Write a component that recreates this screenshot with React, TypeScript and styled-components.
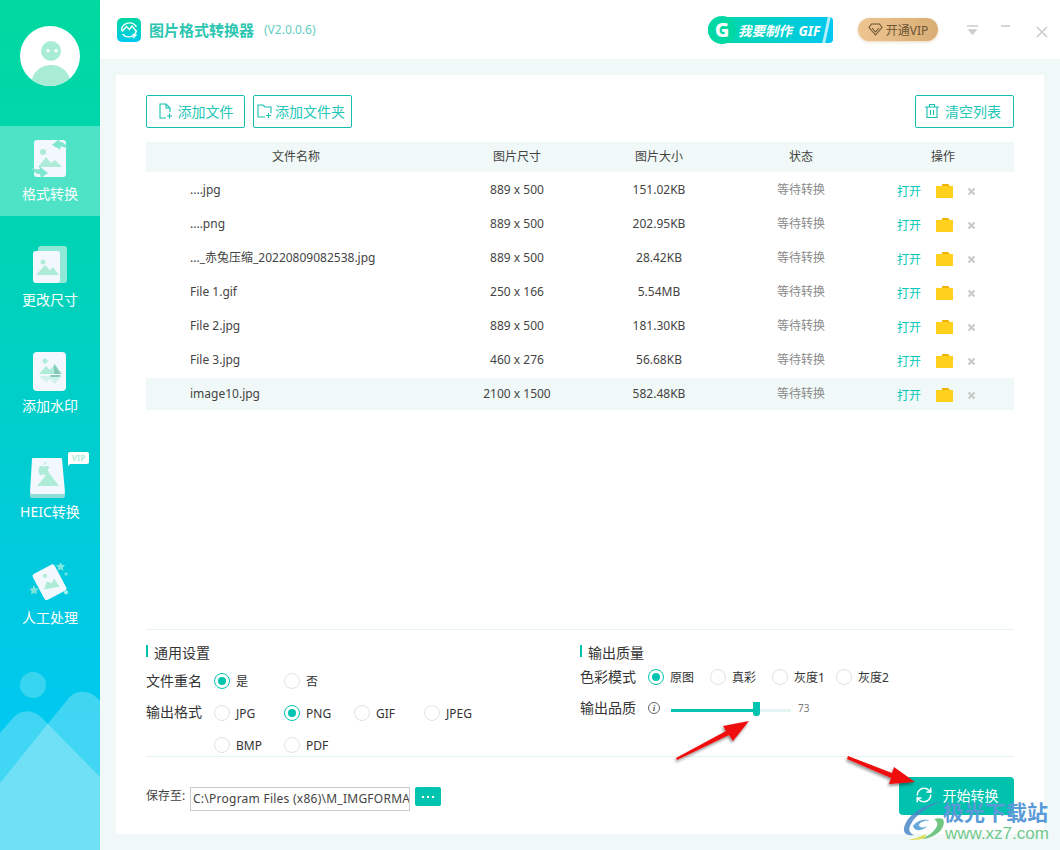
import React from 'react';
import styled, { createGlobalStyle } from 'styled-components';
import { RefreshCw } from 'lucide-react';

const GlobalStyle = createGlobalStyle`
  html, body {
    margin: 0;
    padding: 0;
    background: #ffffff;
  }
  * {
    box-sizing: border-box;
  }
  body {
    font-family: "Noto Sans", "Noto Sans CJK SC", sans-serif;
    color: #333333;
  }
`;

const Window = styled.div`
  position: relative;
  width: 1060px;
  height: 850px;
  display: flex;
  overflow: hidden;
`;

/* sidebar */
const Sidebar = styled.aside`
  position: relative;
  width: 100px;
  flex: none;
  background: linear-gradient(180deg, #00d9a0 0%, #00d3b6 30%, #00cbd9 62%, #00c8f0 85%);
  overflow: hidden;
`;
const Avatar = styled.div`
  width: 60px;
  height: 60px;
  margin: 26px 0 40px 20px;
  border-radius: 50%;
  background: #ffffff;
  overflow: hidden;
`;
const NavList = styled.nav`
  position: relative;
  z-index: 1;
  display: flex;
  flex-direction: column;
  gap: 16px;
`;
const NavItem = styled.div<{ $active?: boolean }>`
  position: relative;
  height: 90px;
  display: flex;
  flex-direction: column;
  align-items: center;
  padding-top: 13px;
  background: ${(p) => (p.$active ? '#4ee3c6' : 'transparent')};
`;
const NavIcon = styled.div`
  width: 44px;
  height: 44px;
  display: flex;
  align-items: center;
  justify-content: center;
`;
const NavLabel = styled.span`
  margin-top: 1px;
  font-size: 14px;
  line-height: 20px;
  color: #ffffff;
  white-space: nowrap;
`;
const VipTag = styled.span`
  position: absolute;
  top: 8px;
  left: 68px;
  width: 21px;
  height: 12px;
  border-radius: 2px;
  background: #ffffff;
  color: #aeeedd;
  font-size: 8px;
  line-height: 12px;
  font-weight: 700;
  text-align: center;

  &::after {
    content: '';
    position: absolute;
    left: 0;
    top: 11px;
    border-top: 3px solid #ffffff;
    border-right: 3px solid transparent;
  }
`;
const SideScene = styled.svg`
  position: absolute;
  left: 0;
  bottom: 0;
  width: 100px;
  height: 180px;
`;

/* right side */
const Content = styled.div`
  flex: 1;
  display: flex;
  flex-direction: column;
  min-width: 0;
  background: #f0f9f7;
`;
const Header = styled.header`
  height: 59px;
  flex: none;
  display: flex;
  align-items: center;
  padding: 0 12px 0 17px;
  background: #ffffff;
`;
const AppTitle = styled.span`
  margin-left: 8px;
  font-size: 15px;
  font-weight: 700;
  color: #2cc6b0;
  white-space: nowrap;
`;
const Version = styled.span`
  margin-left: 10px;
  font-size: 12px;
  color: #5fcfc0;
`;
const GifBanner = styled.div`
  position: relative;
  margin-left: auto;
  width: 125px;
  height: 26px;
  display: flex;
  align-items: center;
  border-radius: 13px 4px 4px 13px;
  background: linear-gradient(90deg, #00d8a4 0%, #00d0c8 50%, #00c8f0 100%);
  color: #ffffff;
`;
const GifMark = styled.span`
  width: 28px;
  height: 28px;
  flex: none;
  border-radius: 50%;
  background: #00d8a4;
  text-align: center;
  font-size: 20px;
  line-height: 27px;
  font-weight: 800;
`;
const GifText = styled.span`
  margin-left: 2px;
  font-size: 13.5px;
  font-weight: 700;
  font-style: italic;
  word-spacing: 3px;
  white-space: nowrap;
`;
const GifShine = styled.span`
  position: absolute;
  right: 5px;
  top: 0;
  width: 3px;
  height: 26px;
  background: rgba(255, 255, 255, 0.7);
  transform: skewX(-12deg);
`;
const VipPill = styled.div`
  margin-left: 25px;
  width: 80px;
  height: 23px;
  display: flex;
  align-items: center;
  justify-content: center;
  gap: 3px;
  border-radius: 12px;
  background: linear-gradient(90deg, #eec491, #d8ae75);
  box-shadow: 0 1px 3px rgba(216, 174, 117, 0.5);
  color: #6d5333;
  font-size: 12px;
`;
const WindowButtons = styled.div`
  margin-left: 29px;
  width: 81px;
  display: flex;
  align-items: center;
  gap: 23px;
`;
const CloseIcon = styled.svg`
  width: 12px;
  height: 12px;
  margin: 4px 0 0 3px;
`;

const Main = styled.main`
  flex: 1;
  display: flex;
  padding: 16px;
  min-height: 0;
`;
const Panel = styled.section`
  flex: 1;
  display: flex;
  flex-direction: column;
  padding: 20px 30px 0;
  background: #ffffff;
`;
const Toolbar = styled.div`
  display: flex;
  gap: 8px;
`;
const ToolButton = styled.button`
  width: 99px;
  height: 33px;
  padding: 0 0 2px 0;
  display: flex;
  align-items: center;
  justify-content: center;
  gap: 5px;
  border: 1px solid #14bfae;
  border-radius: 2px;
  background: #ffffff;
  color: #22c7b5;
  font-family: inherit;
  font-size: 14px;
  white-space: nowrap;
`;
const WideToolButton = styled(ToolButton)`
  padding-right: 3px;
  gap: 3px;
`;
const ClearButton = styled(ToolButton)`
  margin-left: auto;
  padding-right: 4px;
`;

const Table = styled.div`
  margin-top: 14px;
  display: flex;
  flex-direction: column;
`;
const HeadRow = styled.div`
  height: 30px;
  margin-bottom: 1px;
  padding-bottom: 2px;
  display: grid;
  grid-template-columns: 300px repeat(4, 142px);
  align-items: center;
  background: #f0f9f7;
  font-size: 12px;
  color: #444444;
  text-align: center;
`;
const Row = styled.div<{ $selected?: boolean }>`
  height: ${(p) => (p.$selected ? 32 : 34)}px;
  margin: ${(p) => (p.$selected ? '1px 0' : '0')};
  padding-bottom: 2px;
  display: grid;
  grid-template-columns: 300px repeat(4, 142px);
  align-items: center;
  background: ${(p) => (p.$selected ? '#f0f9f7' : 'transparent')};
  font-size: 12px;
  color: #444444;
  text-align: center;
`;
const NameCell = styled.span`
  padding-left: 44px;
  text-align: left;
  white-space: nowrap;
`;
const StatusCell = styled.span`
  color: #8a8a8a;
`;
const ActionCell = styled.div`
  display: flex;
  align-items: center;
  padding: 4px 0 0 25px;
`;
const OpenLink = styled.span`
  color: #00c8b8;
  width: 24px;
  white-space: nowrap;
`;
const FolderIcon = styled.svg`
  margin-left: 15px;
  width: 18px;
  height: 15px;
`;
const RemoveIcon = styled.svg`
  margin-left: 13px;
  width: 9px;
  height: 9px;
`;

/* settings */
const Settings = styled.div`
  margin-top: auto;
  height: 128px;
  padding-top: 15px;
  display: grid;
  grid-template-columns: 434px 1fr;
  border-top: 1px solid #e6f4f1;
  border-bottom: 1px solid #e6f4f1;
`;
const SettingGroup = styled.div`
  display: flex;
  flex-direction: column;
`;
const GroupTitle = styled.div`
  position: relative;
  height: 16px;
  padding-left: 8px;
  font-size: 14px;
  line-height: 16px;
  color: #333333;

  &::before {
    content: '';
    position: absolute;
    left: 0;
    top: 0;
    width: 2px;
    height: 12px;
    background: #00c4b0;
  }
`;
const SettingRow = styled.div<{ $height: number }>`
  height: ${(p) => p.$height}px;
  display: flex;
  align-items: center;
`;
const FirstRow = styled(SettingRow)`
  margin-top: 4px;
`;
const FormatRow = styled(SettingRow)`
  align-items: flex-start;
`;
const RowLabel = styled.span`
  width: 68px;
  flex: none;
  font-size: 14px;
  line-height: 30px;
  color: #333333;
  white-space: nowrap;
`;
const RadioGrid = styled.div<{ $cols: string; $gap?: number; $top?: number }>`
  margin-top: ${(p) => p.$top ?? 0}px;
  display: grid;
  grid-template-columns: ${(p) => p.$cols};
  row-gap: ${(p) => p.$gap ?? 0}px;
`;
const RadioItem = styled.label`
  height: 16px;
  display: flex;
  align-items: center;
  gap: 6px;
  font-size: 12px;
  color: #333333;
  white-space: nowrap;
`;
const RadioDot = styled.span<{ $on?: boolean }>`
  width: 16px;
  height: 16px;
  flex: none;
  display: flex;
  align-items: center;
  justify-content: center;
  border-radius: 50%;
  border: 1px solid ${(p) => (p.$on ? '#00c4b0' : '#e2e2e2')};

  &::after {
    content: '';
    display: ${(p) => (p.$on ? 'block' : 'none')};
    width: 8px;
    height: 8px;
    border-radius: 50%;
    background: #00c4b0;
  }
`;
const InfoMark = styled.span`
  width: 12px;
  height: 12px;
  flex: none;
  border: 1px solid #666666;
  border-radius: 50%;
  font-family: "Liberation Serif", serif;
  font-style: italic;
  font-weight: 700;
  font-size: 9px;
  line-height: 10px;
  text-align: center;
  color: #555555;
`;
const SliderTrack = styled.div`
  position: relative;
  margin-left: 11px;
  width: 120px;
  height: 3px;
  margin-top: 5px;
  background: #e4f4f2;
`;
const SliderFill = styled.div`
  height: 100%;
  background: #00c4b0;
`;
const SliderThumb = styled.span`
  position: absolute;
  top: -7px;
  width: 7px;
  height: 14px;
  margin-left: -3px;
  border-radius: 0 0 3px 3px;
  background: #00c4b0;
`;
const SliderValue = styled.span`
  margin-left: 7px;
  font-size: 10px;
  color: #777777;
`;

/* footer */
const Footer = styled.div`
  height: 77px;
  padding-top: 20px;
  display: flex;
  align-items: flex-start;
`;
const SaveLabel = styled.span`
  margin-top: 11px;
  width: 44px;
  flex: none;
  font-size: 12px;
  line-height: 16px;
  color: #444444;
  white-space: nowrap;
`;
const PathBox = styled.div`
  margin-top: 10px;
  width: 220px;
  height: 24px;
  padding: 0 0 0 2px;
  border: 1px solid #cccccc;
  font-size: 12px;
  line-height: 22px;
  letter-spacing: 0.25px;
  color: #444444;
  white-space: nowrap;
  overflow: hidden;
`;
const DotsButton = styled.button`
  margin: 10px 0 0 5px;
  width: 26px;
  height: 19px;
  padding: 0;
  display: flex;
  align-items: center;
  justify-content: center;
  gap: 3px;
  border: none;
  border-radius: 2px;
  background: #00c4b0;
`;
const Dot = styled.span`
  width: 2px;
  height: 2px;
  background: #ffffff;
`;
const StartButton = styled.button`
  margin-left: auto;
  width: 115px;
  height: 38px;
  padding: 0 0 2px 0;
  display: flex;
  align-items: center;
  justify-content: center;
  gap: 10px;
  border: none;
  border-radius: 4px;
  background: #00c2ae;
  color: #ffffff;
  font-family: inherit;
  font-size: 14px;
`;

/* things lying over the page */
const Arrows = styled.svg`
  position: absolute;
  left: 0;
  top: 0;
  width: 1060px;
  height: 850px;
  pointer-events: none;
`;
const Watermark = styled.div`
  position: absolute;
  left: 900px;
  top: 798px;
  width: 155px;
  height: 52px;
  pointer-events: none;
`;
const WatermarkLogo = styled.svg`
  position: absolute;
  left: 3px;
  top: 2px;
  width: 44px;
  height: 44px;
`;
const WatermarkName = styled.span`
  position: absolute;
  left: 43px;
  top: 2px;
  font-size: 21px;
  line-height: 24px;
  font-weight: 700;
  color: #5a9ad8;
  white-space: nowrap;
`;
const WatermarkUrl = styled.span`
  position: absolute;
  left: 45px;
  top: 26px;
  font-family: "Liberation Sans", sans-serif;
  font-size: 17px;
  line-height: 20px;
  color: #72c88e;
  white-space: nowrap;
`;

const CARD = '#f3f8ff';
const MINT = '#aeecd8';

const ConvertIcon = () => (
  <svg width="44" height="44" viewBox="0 3 44 44">
    <rect x="6" y="4" width="32" height="37" rx="3" fill={CARD} />
    <circle cx="15" cy="16" r="3" fill={MINT} />
    <path d="M10 31l8-10 5 6 4-3 7 7z" fill={MINT} />
    <path d="M24 9l7-6 1 3c4 0 7 3 8 8-3-3-5-4-8-3l1 3z" fill="#7fe6cf" />
    <path d="M20 37l-7 5-1-4c-4 0-7-2-9-7 3 2 6 3 9 2l-1-3z" fill="#7fe6cf" />
  </svg>
);
const ResizeIcon = () => (
  <svg width="44" height="44" viewBox="0 0 44 44">
    <rect x="10" y="1" width="29" height="37" rx="3" fill="#8fe9d6" />
    <rect x="5" y="6" width="27" height="32" rx="3" fill={CARD} />
    <circle cx="15" cy="17" r="2.5" fill={MINT} />
    <path d="M8 30l9-10 5 5 3-3 6 8z" fill={MINT} />
  </svg>
);
const WatermarkIcon = () => (
  <svg width="44" height="44" viewBox="0 2 44 44">
    <rect x="5" y="3" width="33" height="39" rx="4" fill={CARD} />
    <circle cx="17" cy="12" r="2.5" fill={MINT} />
    <path d="M11 25l7-8 4 4 5-6 7 10z" fill={MINT} />
    <path d="M11 27l7 6 4-3 5 5 7-8z" fill={MINT} opacity="0.5" />
    <path d="M26 15v10h7z" fill="#87c9b8" />
    <path d="M22 26h11l-2 2h-8z" fill="#87c9b8" />
  </svg>
);
const HeicIcon = () => (
  <svg width="44" height="44" viewBox="0 0 44 44">
    <path d="M2 35h35v4c0 1-1 2-2 2H4c-1 0-2-1-2-2z" fill="#8fdcd8" />
    <path d="M5 1h28c1 0 1 1 1 1l3 33c0 1-1 2-2 2H4c-1 0-2-1-2-2L4 2c0-1 1-1 1-1z" fill={CARD} />
    <g transform="translate(-2.8 0.7) scale(0.8)">
      <path d="M27 5c-1 3-3 4-4 4 0-2 2-4 4-4z" fill={MINT} />
      <path d="M19 10c2 0 3 1 4 1s2-1 4-1c2 0 3 2 3 3-2 1-2 4 0 5-1 2-2 4-4 4-1 0-2-1-3-1s-2 1-3 1c-3 0-5-8-1-12z" fill={MINT} />
    </g>
    <path d="M9 29l10-12c1-1 2-1 3 0l9 12z" fill={MINT} />
  </svg>
);
const ManualIcon = () => (
  <svg width="48" height="44" viewBox="1.500 3 48 44">
    <rect x="11.500" y="6" width="27" height="32" rx="3" fill={CARD} transform="rotate(-28 25 22)" />
    <circle cx="20" cy="15" r="2.3" fill={MINT} />
    <path d="M19 30l3-9 5 2 3-5 6 9z" fill={MINT} />
    <path d="M37 0l1.500 3 3.500 .5-2.500 2.500 .6 3.500-3.100-1.600-3.100 1.600 .6-3.500-2.500-2.500 3.500-.5z" fill="#7fe6dd" />
    <path d="M8 25l1.500 3.500 3.500 .5-2.500 2.500 .6 3.500-3.100-1.600-3.100 1.600 .6-3.500-2.500-2.500 3.500-.5z" fill="#7fe6dd" />
    <circle cx="43" cy="13" r="1.200" fill="none" stroke="#a5f0e8" />
    <circle cx="43" cy="33" r="2.300" fill="#a5f0e8" />
  </svg>
);

const navItems = [
  { label: '格式转换', icon: <ConvertIcon />, active: true },
  { label: '更改尺寸', icon: <ResizeIcon /> },
  { label: '添加水印', icon: <WatermarkIcon /> },
  { label: 'HEIC转换', icon: <HeicIcon />, vip: true },
  { label: '人工处理', icon: <ManualIcon /> },
];

const files = [
  { name: '....jpg', size: '889 x 500', weight: '151.02KB' },
  { name: '....png', size: '889 x 500', weight: '202.95KB' },
  { name: '..._赤兔压缩_20220809082538.jpg', size: '889 x 500', weight: '28.42KB' },
  { name: 'File 1.gif', size: '250 x 166', weight: '5.54MB' },
  { name: 'File 2.jpg', size: '889 x 500', weight: '181.30KB' },
  { name: 'File 3.jpg', size: '460 x 276', weight: '56.68KB' },
  { name: 'image10.jpg', size: '2100 x 1500', weight: '582.48KB', selected: true },
];

const quality = 71;

const Radio = ({ label, on }: { label: string; on?: boolean }) => (
  <RadioItem>
    <RadioDot $on={on} />
    {label}
  </RadioItem>
);

const App = () => {
  return (
    <Window>
      <GlobalStyle />
      <Sidebar>
        <SideScene viewBox="0 0 100 180">
          <circle cx="33" cy="15" r="13" fill="#ffffff" opacity="0.22" />
          <path d="M0 63L13 48c8-9 20-9 29 0l58 59v73H0z" fill="#ffffff" opacity="0.25" />
          <path d="M0 113L68 29c8-10 22-10 32 2v149H0z" fill="#ffffff" opacity="0.25" />
        </SideScene>
        <Avatar>
          <svg width="60" height="60" viewBox="0 0 60 60">
            <circle cx="31" cy="25" r="10" fill="#a8ecd6" />
            <circle cx="28" cy="24.700" r="1.700" fill="#ffffff" />
            <circle cx="36" cy="24.700" r="1.700" fill="#ffffff" />
            <path d="M11 60c0-12 8-21 20-21s20 9 20 21z" fill="#a8ecd6" />
          </svg>
        </Avatar>
        <NavList>
          {navItems.map((item) => (
            <NavItem key={item.label} $active={item.active}>
              <NavIcon>{item.icon}</NavIcon>
              <NavLabel>{item.label}</NavLabel>
              {item.vip && <VipTag>VIP</VipTag>}
            </NavItem>
          ))}
        </NavList>
      </Sidebar>
      <Content>
        <Header>
          <svg width="24" height="24" viewBox="0 0 24 24">
            <defs>
              <linearGradient id="logoBg" x1="0" y1="0" x2="0" y2="1">
                <stop offset="0" stopColor="#00d8a0" />
                <stop offset="1" stopColor="#00c8ee" />
              </linearGradient>
            </defs>
            <rect width="24" height="24" rx="5" fill="url(#logoBg)" />
            <path d="M4.500 12.500a8 8 0 0 1 15 -3.500M19.500 12.500a8 8 0 0 1-14 3.500" fill="none" stroke="#fff" strokeWidth="1.300" />
            <path d="M5 13.500l4.500-5 3 3 2.500-3.500 4.500 5.500M16 20l3-3-3.500-1" fill="none" stroke="#fff" strokeWidth="1.300" />
          </svg>
          <AppTitle>图片格式转换器</AppTitle>
          <Version>(V2.0.0.6)</Version>
          <GifBanner>
            <GifMark>G</GifMark>
            <GifText>我要制作 GIF</GifText>
            <GifShine />
          </GifBanner>
          <VipPill>
            <svg width="15" height="13" viewBox="0 0 15 13">
              <path d="M3.500 1h8L14 4.500 7.500 12 1 4.500zM4 5l3.500 4L11 5" fill="none" stroke="#6d5333" strokeWidth="1.100" />
            </svg>
            开通VIP
          </VipPill>
          <WindowButtons>
            <svg width="11" height="10" viewBox="0 0 11 10">
              <path d="M0 1h11M2 5h7l-3.500 4z" fill="#cccccc" stroke="#cccccc" strokeWidth="1.400" />
            </svg>
            <svg width="9" height="10" viewBox="0 0 9 10">
              <path d="M0 1h9" stroke="#cccccc" strokeWidth="1.600" />
            </svg>
            <CloseIcon viewBox="0 0 12 12">
              <path d="M1 1l10 10M11 1L1 11" stroke="#cccccc" strokeWidth="1.600" />
            </CloseIcon>
          </WindowButtons>
        </Header>
        <Main>
          <Panel>
            <Toolbar>
              <ToolButton>
                <svg width="15" height="16" viewBox="0 0 15 16" fill="none" stroke="#14bfae" strokeWidth="1.100">
                  <path d="M8 15H2V1h6l4 4v4" />
                  <path d="M8 1v4h4M11.500 10.500v5M9 13h5" />
                </svg>
                添加文件
              </ToolButton>
              <WideToolButton>
                <svg width="15" height="14" viewBox="0 0 15 14" fill="none" stroke="#14bfae" strokeWidth="1.100">
                  <path d="M8 13H1V1h5l2 2h6v6" />
                  <path d="M11.500 9v5M9 11.500h5" />
                </svg>
                添加文件夹
              </WideToolButton>
              <ClearButton>
                <svg width="16" height="16" viewBox="0 0 16 16" fill="none" stroke="#14bfae" strokeWidth="1.100">
                  <path d="M1 4h14M5.500 4V1.500h5V4M3 4v10.500h10V4M6.500 7v5M9.500 7v5" />
                </svg>
                清空列表
              </ClearButton>
            </Toolbar>
            <Table>
              <HeadRow>
                <span>文件名称</span>
                <span>图片尺寸</span>
                <span>图片大小</span>
                <span>状态</span>
                <span>操作</span>
              </HeadRow>
              {files.map((file) => (
                <Row key={file.name} $selected={file.selected}>
                  <NameCell>{file.name}</NameCell>
                  <span>{file.size}</span>
                  <span>{file.weight}</span>
                  <StatusCell>等待转换</StatusCell>
                  <ActionCell>
                    <OpenLink>打开</OpenLink>
                    <FolderIcon viewBox="0 0 18 15">
                      <path d="M6 0h6l2 2H6z" fill="#f0b400" />
                      <rect y="2" width="17" height="12" fill="#ffd11c" />
                    </FolderIcon>
                    <RemoveIcon viewBox="0 0 9 9">
                      <path d="M1.500 1.500l6 6M7.500 1.500l-6 6" stroke="#c8c8c8" strokeWidth="2" />
                    </RemoveIcon>
                  </ActionCell>
                </Row>
              ))}
            </Table>
            <Settings>
              <SettingGroup>
                <GroupTitle>通用设置</GroupTitle>
                <FirstRow $height={32}>
                  <RowLabel>文件重名</RowLabel>
                  <RadioGrid $cols="70px 70px">
                    <Radio label="是" on />
                    <Radio label="否" />
                  </RadioGrid>
                </FirstRow>
                <FormatRow $height={32}>
                  <RowLabel>输出格式</RowLabel>
                  <RadioGrid $cols="repeat(4, 70px)" $gap={16} $top={8}>
                    <Radio label="JPG" />
                    <Radio label="PNG" on />
                    <Radio label="GIF" />
                    <Radio label="JPEG" />
                    <Radio label="BMP" />
                    <Radio label="PDF" />
                  </RadioGrid>
                </FormatRow>
              </SettingGroup>
              <SettingGroup>
                <GroupTitle>输出质量</GroupTitle>
                <SettingRow $height={32}>
                  <RowLabel>色彩模式</RowLabel>
                  <RadioGrid $cols="62px 62px 64px 70px">
                    <Radio label="原图" on />
                    <Radio label="真彩" />
                    <Radio label="灰度1" />
                    <Radio label="灰度2" />
                  </RadioGrid>
                </SettingRow>
                <SettingRow $height={30}>
                  <RowLabel>输出品质</RowLabel>
                  <InfoMark>i</InfoMark>
                  <SliderTrack>
                    <SliderFill style={{ width: `${quality}%` }} />
                    <SliderThumb style={{ left: `${quality}%` }} />
                  </SliderTrack>
                  <SliderValue>73</SliderValue>
                </SettingRow>
              </SettingGroup>
            </Settings>
            <Footer>
              <SaveLabel>保存至:</SaveLabel>
              <PathBox>C:\Program Files (x86)\M_IMGFORMAT</PathBox>
              <DotsButton>
                <Dot />
                <Dot />
                <Dot />
              </DotsButton>
              <StartButton>
                <RefreshCw size={18} strokeWidth={2} />
                开始转换
              </StartButton>
            </Footer>
          </Panel>
        </Main>
      </Content>
      <Arrows viewBox="0 0 1060 850">
        <defs>
          <filter id="arrowShadow" x="-20%" y="-20%" width="140%" height="140%">
            <feDropShadow dx="-1" dy="2" stdDeviation="1.500" floodColor="#000000" floodOpacity="0.45" />
          </filter>
        </defs>
        <g fill="#f01010" filter="url(#arrowShadow)">
          <path d="M676 758l50-27-3-5 26-5-16 20-4-6-52 25z" />
          <path d="M848 756l44 17 2-6 21 15-26 2 2-6-44-19z" />
        </g>
      </Arrows>
      <Watermark>
        <WatermarkLogo viewBox="0 0 44 44">
          <path d="M40 1C22 4 4 14 1 28c-1 6 4 8 10 7-5-2-6-6-3-11C13 14 26 6 40 1z" fill="#4a88c8" opacity="0.85" />
          <path d="M10 26c3-5 12-8 17-5-5-1-10 1-11 4 0 3 5 3 8 1-3 5-13 6-14 0z" fill="#58a0d8" opacity="0.9" />
          <path d="M40 19c3 6-2 14-12 18-3 1-6 2-9 2 6-3 12-7 15-13 1-3 0-5-3-7 4-1 7-1 9 0z" fill="#72c684" />
          <path d="M22 38c-6 2-12 2-17 2 6-1 12-3 18-6z" fill="#dfe05a" />
        </WatermarkLogo>
        <WatermarkName>极光下载站</WatermarkName>
        <WatermarkUrl>www.xz7.com</WatermarkUrl>
      </Watermark>
    </Window>
  );
};

export default App;
